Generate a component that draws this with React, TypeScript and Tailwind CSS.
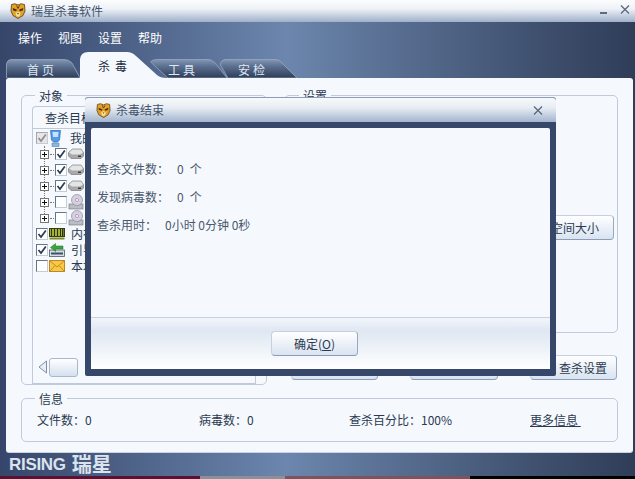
import React from "react";

const font = { fontFamily: '"Noto Sans CJK SC", "Liberation Sans", sans-serif' };

function TigerLogo({ size = 16 }: { size?: number }) {
  return (
    <svg width={size} height={size} viewBox="0 0 16 16" className="shrink-0">
      <path d="M1.5 1.5 L5 0.8 L8 2 L11 0.8 L14.5 1.5 L15 8 L13 12.5 L8 15.5 L3 12.5 L1 8 Z" fill="#e0a228" stroke="#6e4a18" strokeWidth="0.9" />
      <path d="M2.8 5 L7 6.8 L6 8.2 L3 7.2 Z M13.2 5 L9 6.8 L10 8.2 L13 7.2 Z" fill="#4a2c0a" />
      <path d="M5.5 10 L8 8.5 L10.5 10 L9.5 13.5 L6.5 13.5 Z" fill="#f8e09a" />
      <path d="M6.5 2.5 L8 5.5 L9.5 2.5" stroke="#7a3c0a" fill="none" />
      <path d="M7 10 L9 10 L8 11.4 Z" fill="#5a2c0a" />
    </svg>
  );
}

function Close({ className = "" }: { className?: string }) {
  return (
    <svg width="10" height="9" viewBox="0 0 10 9" className={className}>
      <path d="M1 0.5 L9 8.5 M9 0.5 L1 8.5" stroke="#55667e" strokeWidth="1.2" />
    </svg>
  );
}

function Check({ checked, gray }: { checked?: boolean; gray?: boolean }) {
  return (
    <span className={`flex h-[12px] w-[12px] shrink-0 items-center justify-center border border-r-[#c4ccd6] border-b-[#c4ccd6] ${gray ? "border-[#a8a8a8] bg-[#e6e6e6]" : "border-[#66768a] bg-white"}`}>
      {checked && (
        <svg width="10" height="10" viewBox="0 0 10 10">
          <path d="M1.5 5 L4 8 L8.8 1.5" fill="none" stroke={gray ? "#8f8f8f" : "#2a3c56"} strokeWidth="1.7" />
        </svg>
      )}
    </span>
  );
}

function Plus() {
  return (
    <span className="z-10 flex h-[9px] w-[9px] shrink-0 items-center justify-center border border-[#777] bg-white">
      <svg width="7" height="7" viewBox="0 0 7 7">
        <path d="M1 3.5 H6 M3.5 1 V6" stroke="#111" strokeWidth="1" />
      </svg>
    </span>
  );
}

function Disk() {
  return (
    <svg width="16" height="12" viewBox="0 0 16 12" className="shrink-0">
      <path d="M0.5 4.5 L4.5 1 H13 L15.5 4.5 V8 L13 10.5 H3 L0.5 8 Z" fill="#a9a9a9" stroke="#6d6d6d" strokeWidth="0.6" />
      <path d="M1 4.5 L4.5 1.5 H13 L15 4.5 L12 6.5 H4 Z" fill="#e4e4e4" />
      <rect x="10" y="7.5" width="3" height="1.5" fill="#3e3e3e" />
    </svg>
  );
}

function Cd() {
  return (
    <svg width="16" height="16" viewBox="0 0 16 16" className="shrink-0">
      <rect x="1" y="10" width="14" height="5" fill="#b9bec5" stroke="#6d7278" strokeWidth="0.6" />
      <circle cx="9" cy="6" r="5.5" fill="#d9cfe4" stroke="#7b7c8f" strokeWidth="0.6" />
      <circle cx="9" cy="6" r="1.5" fill="#fff" stroke="#666" strokeWidth="0.5" />
    </svg>
  );
}

function Monitor() {
  return (
    <svg width="13" height="17" viewBox="0 0 13 17" className="shrink-0">
      <path d="M1.5 0.5 H11.5 L10.5 10 L8.5 12 H4.5 L2.5 10 Z" fill="#4f9bec" stroke="#2f66a8" strokeWidth="0.7" />
      <path d="M3.5 2 H9.5 L9 7 H4 Z" fill="#c6e2ff" />
      <path d="M3 13 H10 V16.5 H3 Z" fill="#8fb4e0" stroke="#5a7fa8" strokeWidth="0.6" />
    </svg>
  );
}

function Memory() {
  return (
    <svg width="16" height="12" viewBox="0 0 16 12" className="shrink-0">
      <rect x="0.5" y="0.5" width="15" height="8" fill="#e8e04a" stroke="#3b3b10" />
      <path d="M2.5 1 V8 M5.5 1 V8 M8.5 1 V8 M11.5 1 V8 M13.8 1 V8" stroke="#1e3a10" strokeWidth="1.6" />
      <path d="M0.5 10.5 H15.5" stroke="#7d8b28" strokeWidth="2" />
    </svg>
  );
}

function Boot() {
  return (
    <svg width="16" height="14" viewBox="0 0 16 14" className="shrink-0">
      <rect x="0.5" y="7" width="15" height="6.5" fill="#d6dce4" stroke="#4b5a6a" strokeWidth="0.8" />
      <rect x="2" y="9.5" width="12" height="2" fill="#3d5065" />
      <path d="M1.5 4.5 L6.5 0.5 V3 H14 V6 H6.5 V8.5 Z" fill="#3aa838" stroke="#1f6a20" strokeWidth="0.5" />
    </svg>
  );
}

function Mail() {
  return (
    <svg width="16" height="12" viewBox="0 0 16 12" className="shrink-0">
      <rect x="0.5" y="0.5" width="15" height="11" fill="#f6c94a" stroke="#b98a20" />
      <path d="M0.5 0.5 L8 7 L15.5 0.5 M0.5 11.5 L6 5.5 M15.5 11.5 L10 5.5" fill="none" stroke="#c9891d" />
    </svg>
  );
}

function Btn({ children, className = "" }: { children: React.ReactNode; className?: string }) {
  return (
    <div className={`flex h-[25px] shrink-0 items-center justify-center rounded-[4px] border border-[#c6d0de] border-r-[#98a8bf] border-b-[#8c9db6] bg-gradient-to-b from-white to-[#d9e3f1] text-[12px] text-[#2b3a50] ${className}`}>
      {children}
    </div>
  );
}

function TabShape({ id, d, w, h, active }: { id: string; d: string; w: number; h: number; active?: boolean }) {
  return (
    <svg width={w} height={h} viewBox={`0 0 ${w} ${h}`} className="absolute right-0 bottom-0">
      <defs>
        <linearGradient id={id} x1="0" y1="0" x2="0" y2="1">
          <stop offset="0" stopColor="#8397b5" />
          <stop offset="0.35" stopColor="#5d7190" />
          <stop offset="1" stopColor="#2e3d58" />
        </linearGradient>
      </defs>
      <path d={d} fill={active ? "#f5f9fe" : `url(#${id})`} stroke={active ? "none" : "#94a7c4"} strokeWidth="0.8" />
    </svg>
  );
}

function Group({ title, titleLeft = "left-[13px]", className = "", children }: { title: string; titleLeft?: string; className?: string; children?: React.ReactNode }) {
  return (
    <div className={`relative rounded-[5px] border border-[#c0cadb] ${className}`}>
      <span className={`absolute top-[-7px] bg-[#f5f9fe] px-[4px] text-[12px] leading-[14px] text-[#2b3a50] ${titleLeft}`}>{title}</span>
      {children}
    </div>
  );
}

function Row({ children }: { children: React.ReactNode }) {
  return <div className="flex h-[16px] shrink-0 items-center gap-[1px] pl-[3px]">{children}</div>;
}

function SubRow({ children }: { children: React.ReactNode }) {
  return (
    <div className="flex h-[16px] shrink-0 items-center gap-[1px] pl-[7px]">
      <Plus />
      <span className="w-[4px] border-t border-dotted border-[#777]" />
      {children}
    </div>
  );
}

export default function App() {
  return (
    <div style={font} className="relative flex h-[479px] w-[635px] flex-col overflow-hidden bg-black">
      <div className="flex h-[476px] shrink-0 flex-col bg-gradient-to-r from-[#36466a] via-[#6c86ad] via-45% to-[#2f3d58]">
        {/* title bar */}
        <div className="flex h-[22px] shrink-0 items-center bg-gradient-to-b from-[#fbfcfd] via-[#eef2f7] via-40% to-[#9fb1c9] pr-[5px] pl-[10px]">
          <TigerLogo size={16} />
          <span className="ml-[5px] text-[12px] text-[#44546c]">瑞星杀毒软件</span>
          <span className="mt-[3px] ml-auto h-[2px] w-[7px] bg-[#5a6b82]" />
          <Close className="mt-[-3px] ml-[13px]" />
        </div>

        {/* menu */}
        <div className="flex h-[32px] shrink-0 items-center gap-[16px] pl-[18px] text-[12px] text-white">
          <span>操作</span>
          <span>视图</span>
          <span>设置</span>
          <span>帮助</span>
        </div>

        {/* tabs */}
        <div className="flex h-[24px] shrink-0 items-end pl-[6px] text-[12px] tracking-[3px]">
          <div className="relative h-[19px] w-[74px] pt-[2px] pl-[21px] text-[#dfe7f2]">
            <TabShape id="t1" w={74} h={19} d="M0.5 19 V6 Q0.5 0.5 6 0.5 H58 Q63 0.5 66 4 L74 19 Z" />
            <span className="relative">首页</span>
          </div>
          <div className="relative z-10 h-[26px] w-[87px] pt-[5px] pl-[18px] tracking-[5px] text-[#1f2d44]">
            <TabShape id="t2" w={87} h={26} active d="M0 26 V7 Q1 0 8 0 H47 Q52 0 56 4 L77 23 Q80 26 87 26 Z" />
            <span className="relative">杀毒</span>
          </div>
          <div className="relative -ml-[17px] h-[19px] w-[77px] pt-[2px] pl-[18px] text-[#dfe7f2]">
            <TabShape id="t3" w={77} h={19} d="M0.5 3 Q2 0.5 8 0.5 H58 Q62 0.5 65 4 L77 19 H18 Z" />
            <span className="relative">工具</span>
          </div>
          <div className="relative -ml-[7px] h-[19px] w-[77px] pt-[2px] pl-[18px] text-[#dfe7f2]">
            <TabShape id="t4" w={77} h={19} d="M0.5 6 Q0.5 0.5 6 0.5 H56 Q60 0.5 62 4 L77 19 H8 Z" />
            <span className="relative">安检</span>
          </div>
        </div>

        {/* content panel */}
        <div className="relative mr-[2px] ml-[6px] flex h-[374px] shrink-0 flex-col rounded-[3px] bg-[#f5f9fe] px-[15px] pt-[17px] shadow-[0_1px_0_#c8d4e4]">
          <div className="flex h-[290px] shrink-0 gap-[17px]">
            <Group title="对象" className="flex h-[290px] w-[246px] shrink-0 flex-col px-[10px] pt-[10px]">
              <div className="flex h-[22px] w-[74px] shrink-0 items-center justify-center rounded-t-[4px] border border-b-0 border-[#c0cadb] text-[12px] text-[#2b3a50]">查杀目标</div>
              <div className="flex flex-1 flex-col border border-[#c0cadb] pt-[1px] pb-[6px] text-[12px] text-[#2b3a50]">
                <Row><Check checked gray /><Monitor /><span className="ml-[7px]">我的电脑</span></Row>
                <div className="relative flex flex-col">
                  <span className="absolute top-0 bottom-[8px] left-[11px] border-l border-dotted border-[#777]" />
                  <SubRow><Check checked /><Disk /></SubRow>
                  <SubRow><Check checked /><Disk /></SubRow>
                  <SubRow><Check checked /><Disk /></SubRow>
                  <SubRow><Check /><Cd /></SubRow>
                  <SubRow><Check /><Cd /></SubRow>
                </div>
                <Row><Check checked /><Memory /><span className="ml-[5px]">内存</span></Row>
                <Row><Check checked /><Boot /><span className="ml-[5px]">引导区</span></Row>
                <Row><Check /><Mail /><span className="ml-[5px]">本地邮件</span></Row>
                <div className="mt-auto flex h-[20px] items-center gap-[1px] pl-[5px]">
                  <svg width="10" height="14" viewBox="0 0 10 14"><path d="M8.5 1 L1 7 L8.5 13 Z" fill="#e9eef6" stroke="#7f8fa6" /></svg>
                  <div className="h-[19px] w-[29px] rounded-[3px] border border-[#aab8cb] bg-gradient-to-b from-white to-[#d5e0ef]" />
                </div>
              </div>
            </Group>

            <div className="flex flex-1 flex-col">
              <Group title="设置" titleLeft="left-[14px]" className="h-[238px] shrink-0">
                <div className="flex justify-end pt-[119px] pr-[3px]">
                  <Btn className="w-[78px]">空间大小</Btn>
                </div>
              </Group>
              <div className="mt-[22px] flex justify-end gap-[32px] pr-[1px]">
                <Btn className="w-[87px]">扫描</Btn>
                <Btn className="w-[88px]">停止</Btn>
                <Btn className="w-[87px] pl-[19px]">查杀设置</Btn>
              </div>
            </div>
          </div>

          <Group title="信息" className="mt-[13px] flex h-[44px] shrink-0 items-center text-[12px] text-[#2b3a50]">
            <span className="ml-[15px] w-[162px]">文件数：0</span>
            <span className="w-[150px]">病毒数：0</span>
            <span className="w-[181px]">查杀百分比：100%</span>
            <span className="underline">更多信息&nbsp;</span>
          </Group>
        </div>

        {/* footer logo */}
        <div className="flex h-[24px] shrink-0 items-center gap-[6px] pl-[9px] leading-none font-bold text-[#dbe3ee]">
          <span className="text-[17px] tracking-[-0.3px]" style={{ fontFamily: '"Liberation Sans", sans-serif' }}>RISING</span>
          <span className="text-[20px]">瑞星</span>
        </div>
      </div>

      {/* desktop wallpaper showing under the window */}
      <div className="flex h-[3px] shrink-0">
        <span className="w-[200px] bg-[#5a1232]" />
        <span className="w-[85px] bg-[#8d9099]" />
        <span className="w-[185px] bg-[#7a5560]" />
        <span className="flex-1 bg-black" />
      </div>

      {/* dialog */}
      <div className="absolute top-[97px] left-[85px] flex h-[279px] w-[471px] flex-col rounded-t-[3px] rounded-b-[2px] border-t border-[#8a9cb8] bg-[#36476a]">
        <div className="flex h-[24px] shrink-0 items-center rounded-t-[3px] bg-gradient-to-b from-[#f7f9fb] via-[#e8edf4] via-40% to-[#a3b5cd] pr-[13px] pl-[11px]">
          <TigerLogo size={15} />
          <span className="ml-[5px] text-[12px] text-[#44546c]">杀毒结束</span>
          <Close className="ml-auto" />
        </div>
        <div className="mt-[6px] mr-[6px] mb-[7px] ml-[6px] flex min-h-0 flex-1 flex-col rounded-[2px] bg-[#f5f9fe]">
          <div className="flex h-[189px] shrink-0 flex-col gap-[14px] pt-[34px] pl-[6px] text-[12px] leading-[14px] text-[#4a576c]">
            <div className="flex"><span>查杀文件数：</span><span className="ml-[8px]">0</span><span className="ml-[6px]">个</span></div>
            <div className="flex"><span>发现病毒数：</span><span className="ml-[8px]">0</span><span className="ml-[6px]">个</span></div>
            <div className="flex"><span>查杀用时：</span><span className="ml-[8px]">0小时 0分钟 0秒</span></div>
          </div>
          <div className="flex flex-1 items-center border-t border-[#c5d1e2] bg-gradient-to-b from-[#f2f6fb] via-[#dfe7f2] via-25% to-white pl-[180px]">
            <Btn className="w-[87px]">确定(<span className="underline">O</span>)</Btn>
          </div>
        </div>
      </div>
    </div>
  );
}
